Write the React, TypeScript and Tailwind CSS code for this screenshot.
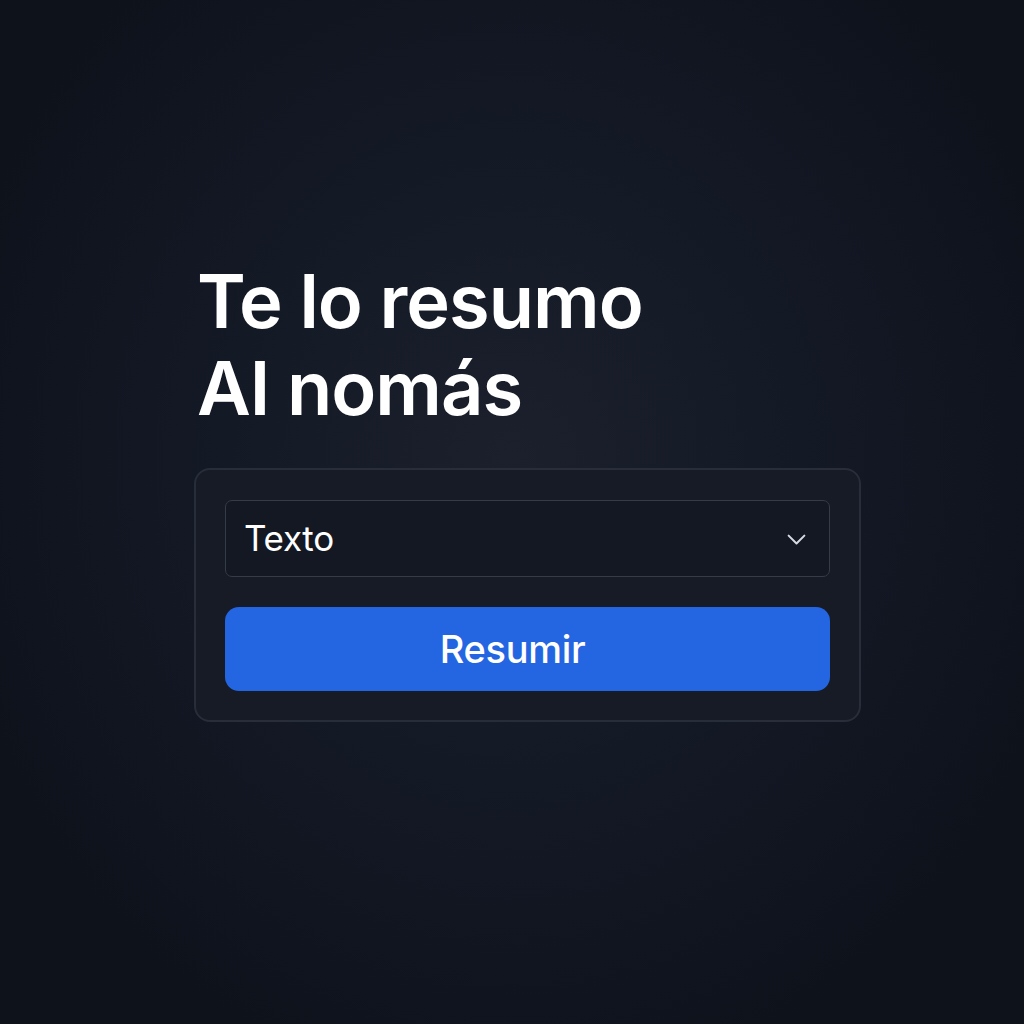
import React, { useState } from 'react';

export default function App() {
  const [mode, setMode] = useState('Texto');

  return (
    <div
      className="min-h-screen w-full bg-[#0e121b] bg-[radial-gradient(ellipse_at_50%_45%,#1b202c_0%,#141926_40%,#0e121b_80%)] text-white"
      style={{ fontFamily: 'Inter, "Noto Sans", sans-serif' }}
    >
      <div className="flex flex-col pl-[194px] pt-[258px]">
        <h1 className="pl-[3px] text-[74px] font-semibold leading-[87px] tracking-[-1px] text-white">
          Te lo resumo
          <br />
          AI nomás
        </h1>

        {/* Summary card */}
        <div className="mt-[36px] flex w-[667px] flex-col gap-[30px] rounded-[16px] border-2 border-[#272d39] bg-[#161b26] px-[29px] pb-[29px] pt-[30px]">
          <div className="relative">
            <select
              value={mode}
              onChange={(e) => setMode(e.target.value)}
              className="h-[77px] w-full appearance-none rounded-[7px] border border-[#353b48] bg-[#131823] pl-[18px] pr-12 text-[35px] tracking-[-0.3px] text-white outline-none"
            >
              <option>Texto</option>
              <option>Enlace</option>
              <option>Documento</option>
            </select>
            <svg
              className="pointer-events-none absolute right-[20px] top-1/2 h-[27px] w-[27px] -translate-y-1/2 text-[#d6dae2]"
              fill="none"
              viewBox="0 0 24 24"
              stroke="currentColor"
              strokeWidth={1.8}
            >
              <path strokeLinecap="round" strokeLinejoin="round" d="M5 9l7 7 7-7" />
            </svg>
          </div>
          <button
            type="button"
            className="h-[84px] w-full rounded-[14px] bg-[#2465e2] pr-[30px] text-[38px] font-medium tracking-[-0.3px] text-white hover:bg-[#1f58cc]"
          >
            Resumir
          </button>
        </div>
      </div>
    </div>
  );
}
